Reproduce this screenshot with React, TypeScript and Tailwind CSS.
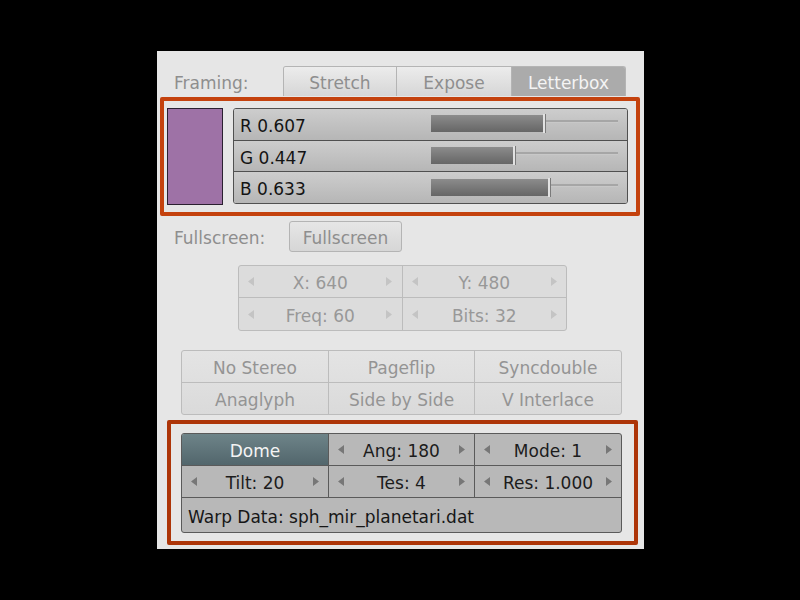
import React from 'react';

const font = { fontFamily: '"DejaVu Sans", "Liberation Sans", sans-serif' };

const Arrow = ({ dir, color }: { dir: 'l' | 'r'; color: string }) => (
  <svg width="6" height="9" viewBox="0 0 6 9" className="shrink-0">
    {dir === 'l' ? <path d="M6 0 L0 4.5 L6 9 Z" fill={color} /> : <path d="M0 0 L6 4.5 L0 9 Z" fill={color} />}
  </svg>
);

const NumCell = ({
  label,
  dark,
  className,
}: {
  label: string;
  dark?: boolean;
  className: string;
}) => (
  <div className={`flex items-center justify-between px-[9px] ${className}`}>
    <Arrow dir="l" color={dark ? '#777' : '#c4c4c4'} />
    <span className={`pt-[4px] ${dark ? 'text-[#1c1c1c]' : 'text-[#989898]'}`}>{label}</span>
    <Arrow dir="r" color={dark ? '#777' : '#c4c4c4'} />
  </div>
);

const sliders = [
  { label: 'R 0.607', v: 0.607 },
  { label: 'G 0.447', v: 0.447 },
  { label: 'B 0.633', v: 0.633 },
];

const cell = 'flex items-center justify-center pt-[4px]';

export default function App() {
  return (
    <div className="w-[800px] h-[600px] bg-black pl-[157px] pt-[51px] text-[17px] leading-none" style={font}>
      <div className="w-[487px] h-[498px] bg-[#e6e6e6] flex flex-col">
        {/* Framing */}
        <div className="mt-[15px] flex items-center h-[30px]">
          <div className="w-[126px] pl-[17px] pt-[4px] text-[#8e8e8e]">Framing:</div>
          <div className="flex h-[30px] rounded-t-[3px] overflow-hidden border border-b-0 border-[#b4b4b4]">
            <div className={`w-[113px] ${cell} bg-gradient-to-b from-[#ececec] to-[#d6d6d6] text-[#8e8e8e] border-r border-[#b4b4b4]`}>Stretch</div>
            <div className={`w-[115px] ${cell} bg-gradient-to-b from-[#ececec] to-[#d6d6d6] text-[#8e8e8e] border-r border-[#b4b4b4]`}>Expose</div>
            <div className={`w-[113px] ${cell} bg-[#ababab] text-[#f4f4f4]`}>Letterbox</div>
          </div>
        </div>

        {/* Color */}
        <div className="mt-[1px] ml-[3px] w-[480px] h-[119px] border-[4px] border-[#c4420e] rounded-[2px] flex pl-[3px] pt-[7px]">
          <div className="w-[56px] h-[97px] bg-[#9e72a6] border border-[#2a2030]" />
          <div className="ml-[10px] w-[395px] h-[96px] flex flex-col rounded-[3px] overflow-hidden border border-[#505050]">
            {sliders.map((s, i) => (
              <div
                key={s.label}
                className={`flex-1 flex items-center bg-gradient-to-b from-[#cdcdcd] to-[#b6b6b6] ${i < 2 ? 'border-b border-[#505050]' : ''}`}
              >
                <span className="pl-[6px] pt-[4px] w-[197px] text-[#141414]">{s.label}</span>
                <div className="relative w-[190px] h-[18px]">
                  <div className="absolute left-0 right-[3px] top-[5px] h-[3px] bg-[#a6a6a6] border-b border-[#c8c8c8]" />
                  <div
                    className="absolute left-0 top-0 h-[17px] bg-gradient-to-b from-[#8c8c8c] to-[#666666]"
                    style={{ width: `${s.v * 186}px` }}
                  />
                  <div
                    className="absolute top-[-1px] h-[19px] w-[3px] bg-[#e2e2e2] border-r border-[#7a7a7a]"
                    style={{ left: `${s.v * 186 - 1}px` }}
                  />
                </div>
              </div>
            ))}
          </div>
        </div>

        {/* Fullscreen */}
        <div className="mt-[5px] flex items-center h-[31px]">
          <div className="w-[132px] pl-[17px] pt-[4px] text-[#8e8e8e]">Fullscreen:</div>
          <div className={`w-[113px] h-[31px] ${cell} rounded-[3px] border border-[#b4b4b4] bg-gradient-to-b from-[#e6e6e6] to-[#d6d6d6] text-[#8e8e8e]`}>
            Fullscreen
          </div>
        </div>

        {/* Resolution */}
        <div className="mt-[13px] ml-[81px] w-[329px] h-[66px] grid grid-cols-2 grid-rows-2 rounded-[3px] overflow-hidden border border-[#bcbcbc] bg-[#dcdcdc]">
          <NumCell label="X: 640" className="border-r border-b border-[#bcbcbc]" />
          <NumCell label="Y: 480" className="border-b border-[#bcbcbc]" />
          <NumCell label="Freq: 60" className="border-r border-[#bcbcbc]" />
          <NumCell label="Bits: 32" className="" />
        </div>

        {/* Stereo */}
        <div className="mt-[19px] ml-[24px] w-[441px] h-[65px] grid grid-cols-[147px_146px_1fr] grid-rows-2 rounded-[3px] overflow-hidden border border-[#bcbcbc] bg-gradient-to-b from-[#e4e4e4] to-[#dadada] text-[#949494]">
          <div className={`${cell} border-r border-b border-[#bcbcbc]`}>No Stereo</div>
          <div className={`${cell} border-r border-b border-[#bcbcbc]`}>Pageflip</div>
          <div className={`${cell} border-b border-[#bcbcbc]`}>Syncdouble</div>
          <div className={`${cell} border-r border-[#bcbcbc]`}>Anaglyph</div>
          <div className={`${cell} border-r border-[#bcbcbc]`}>Side by Side</div>
          <div className={cell}>V Interlace</div>
        </div>

        {/* Dome */}
        <div className="mt-[5px] ml-[10px] w-[471px] h-[125px] border-[4px] border-[#ad3508] rounded-[2px] pl-[10px] pt-[9px]">
          <div className="w-[441px] h-[100px] grid grid-cols-[147px_146px_1fr] grid-rows-[32px_32px_1fr] rounded-[3px] overflow-hidden border border-[#5a5a5a] bg-[#b8b8b8]">
            <div className={`${cell} bg-gradient-to-b from-[#6e8489] to-[#52666c] text-[#f4f4f4] border-r border-b border-[#5a5a5a]`}>Dome</div>
            <NumCell dark label="Ang: 180" className="border-r border-b border-[#5a5a5a]" />
            <NumCell dark label="Mode: 1" className="border-b border-[#5a5a5a]" />
            <NumCell dark label="Tilt: 20" className="border-r border-b border-[#5a5a5a]" />
            <NumCell dark label="Tes: 4" className="border-r border-b border-[#5a5a5a]" />
            <NumCell dark label="Res: 1.000" className="border-b border-[#5a5a5a]" />
            <div className="col-span-3 flex items-center pl-[6px] pt-[4px] text-[#161616]">Warp Data: sph_mir_planetari.dat</div>
          </div>
        </div>
      </div>
    </div>
  );
}
